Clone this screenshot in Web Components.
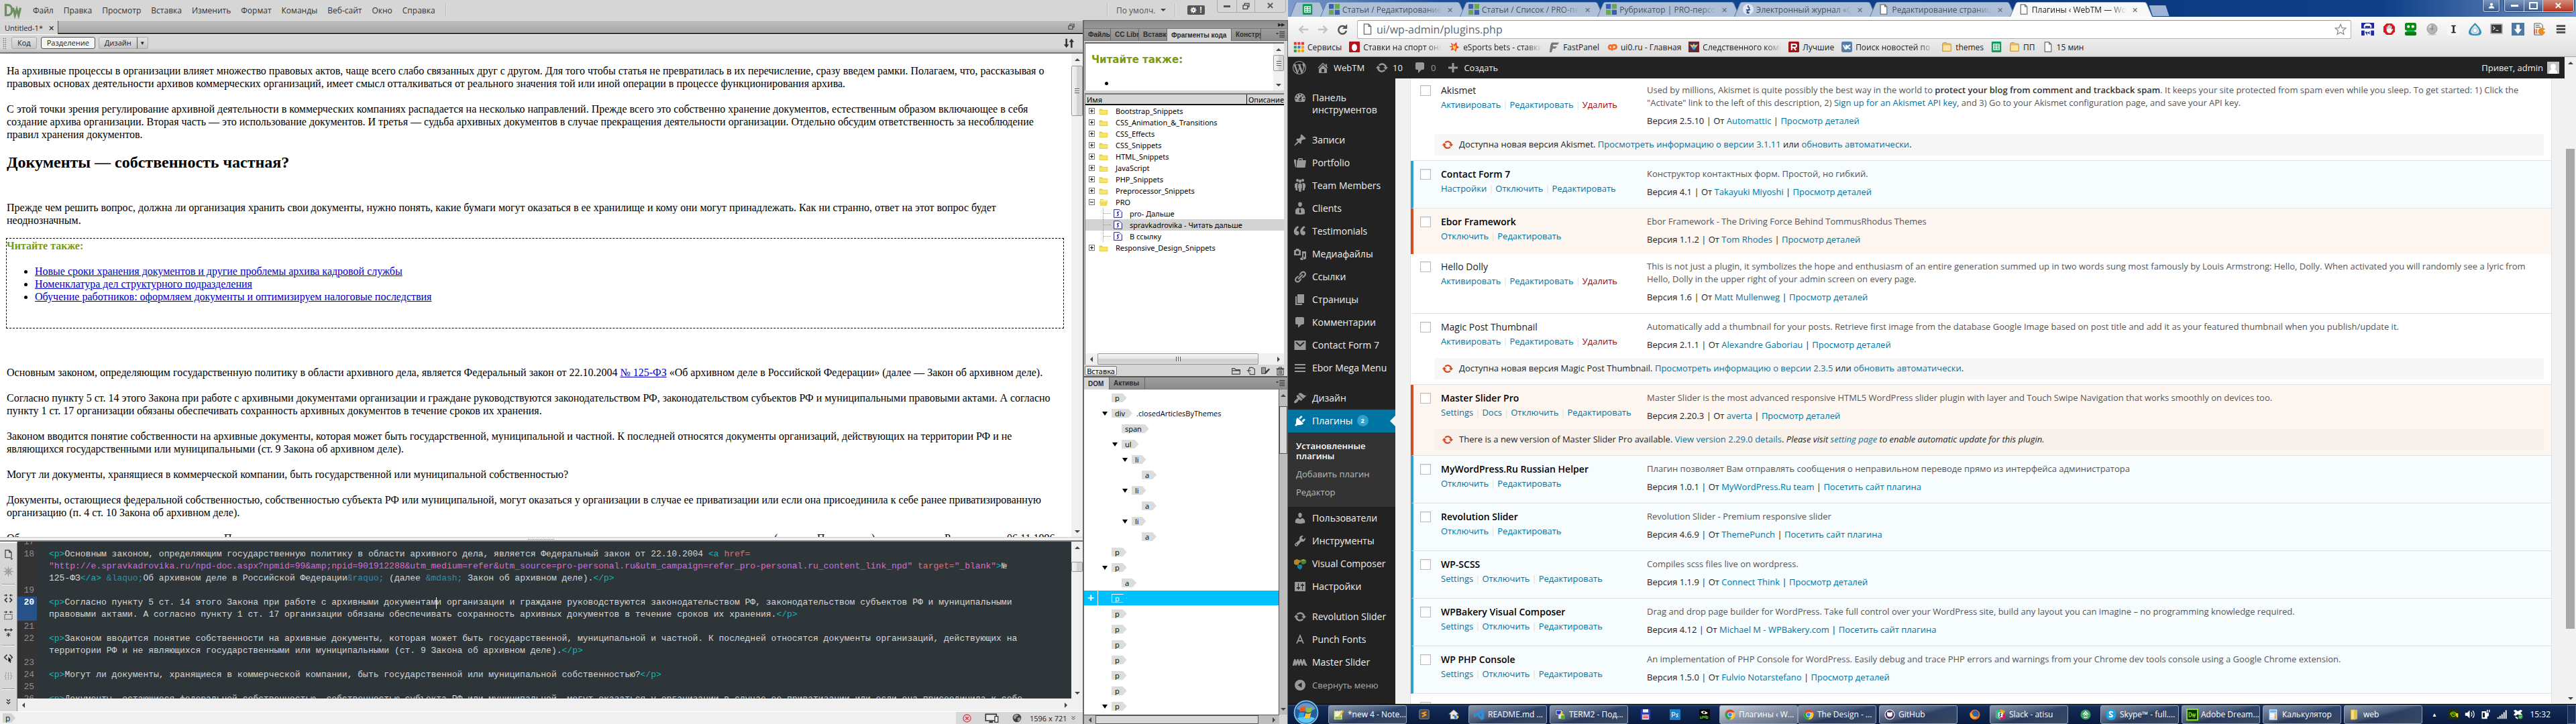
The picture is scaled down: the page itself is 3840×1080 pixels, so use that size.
<!DOCTYPE html>
<html lang="ru">
<head>
<meta charset="utf-8">
<title>Desktop</title>
<style>
html,body{margin:0;height:100%;overflow:hidden;background:#fff}
desk-top{height:100vh}
</style>
</head>
<body>
<desk-top></desk-top>
<script>
const define=(name,css,html)=>customElements.define(name,class extends HTMLElement{
  constructor(){super();const r=this.attachShadow({mode:'open'});
    r.innerHTML='<style>*{box-sizing:border-box}button,select,input{font:inherit;color:inherit;margin:0;border:0;background:none;padding:0}a{color:inherit;text-decoration:none}'+css+'</style>'+(typeof html==='function'?html(this):html);}
});

/* ---------- icons ---------- */
const P=d=>`<path fill="currentColor" d="${d}"/>`;
const ICONS={
 wp:P("M20 10c0-5.51-4.49-10-10-10C4.48 0 0 4.49 0 10c0 5.52 4.48 10 10 10 5.51 0 10-4.48 10-10zM7.78 15.37L4.37 6.22c.55-.02 1.17-.08 1.17-.08.5-.06.44-1.13-.06-1.11 0 0-1.45.11-2.37.11-.18 0-.37 0-.58-.01C4.12 2.69 6.87 1.11 10 1.11c2.33 0 4.45.87 6.05 2.34-.68-.11-1.65.39-1.65 1.58 0 .74.45 1.36.9 2.1.35.61.55 1.36.55 2.46 0 1.49-1.4 5-1.4 5l-3.03-8.37c.54-.02.82-.17.82-.17.5-.05.44-1.25-.06-1.22 0 0-1.44.12-2.38.12-.87 0-2.33-.12-2.33-.12-.5-.03-.56 1.2-.06 1.22l.92.08 1.26 3.41zM17.41 10c.24-.64.74-1.87.43-4.25.7 1.29 1.05 2.71 1.05 4.25 0 3.29-1.73 6.24-4.4 7.78.97-2.59 1.94-5.2 2.92-7.78zM6.1 18.09C3.12 16.65 1.11 13.53 1.11 10c0-1.3.23-2.48.72-3.59C3.25 10.3 4.67 14.2 6.1 18.09zm4.03-6.63l2.58 6.98c-.86.29-1.76.45-2.71.45-.79 0-1.57-.11-2.29-.33.81-2.38 1.62-4.74 2.42-7.1z"),
 home:P("M16 8.5l1.53 1.53-1.06 1.06L10 4.6l-6.47 6.49-1.06-1.06L10 2.5l4 4v-2h2v4zm-6-2.46l6 5.99V18H4v-5.97zM12 17v-5H8v5h4z"),
 update:P("M10.2 3.28c3.53 0 6.43 2.61 6.92 6h2.08l-3.5 4-3.5-4h2.32c-.45-1.97-2.21-3.45-4.32-3.45-1.45 0-2.73.71-3.54 1.78L4.95 5.66C6.23 4.2 8.11 3.28 10.2 3.28zm-.4 13.44c-3.52 0-6.43-2.61-6.92-6H.8l3.5-4c1.17 1.33 2.33 2.67 3.5 4H5.48c.45 1.97 2.21 3.45 4.32 3.45 1.45 0 2.73-.71 3.54-1.78l1.71 1.95c-1.28 1.46-3.15 2.38-5.25 2.38z"),
 comment:P("M5 2h9c1.1 0 2 .9 2 2v7c0 1.1-.9 2-2 2h-2l-5 5v-5H5c-1.1 0-2-.9-2-2V4c0-1.1.9-2 2-2z"),
 plus:P("M8.500 3h3v5.500h5.500v3h-5.500V17h-3v-5.500H3v-3h5.500z"),
 dash:P("M3.760 16h12.480c1.100-1.370 1.760-3.110 1.760-5 0-4.420-3.580-8-8-8s-8 3.580-8 8c0 1.890.660 3.630 1.760 5zM10 4c.55 0 1 .45 1 1s-.45 1-1 1-1-.45-1-1 .45-1 1-1zM6 6c.55 0 1 .45 1 1s-.45 1-1 1-1-.45-1-1 .45-1 1-1zm8 0c.55 0 1 .45 1 1s-.45 1-1 1-1-.45-1-1 .45-1 1-1zm-5.370 5.550L12 7v6c0 1.100-.9 2-2 2s-2-.9-2-2c0-.57.24-1.080.63-1.450zM4 10c.55 0 1 .45 1 1s-.45 1-1 1-1-.45-1-1 .45-1 1-1zm12 0c.55 0 1 .45 1 1s-.45 1-1 1-1-.45-1-1 .45-1 1-1zm-5 3c0-.55-.45-1-1-1s-1 .45-1 1 .45 1 1 1 1-.45 1-1z"),
 pin:P("M10.44 3.02l1.82-1.82 6.36 6.35-1.83 1.82c-1.05-.68-2.48-.57-3.41.36l-.75.75c-.92.93-1.04 2.35-.35 3.41l-1.83 1.82-2.41-2.41-2.8 2.79c-.42.42-3.38 2.71-3.8 2.29s1.86-3.39 2.28-3.81l2.79-2.79L4.1 9.36l1.83-1.82c1.05.69 2.48.57 3.4-.36l.75-.75c.93-.92 1.05-2.35.36-3.41z"),
 folio:P("M1 5h3v10.500L3 17 1 8zM5 6h2V4.500C7 3.500 7.500 3 8.500 3h4c1 0 1.500.5 1.500 1.500V6h5l-1.500 11H4.500L5.500 7zM8.500 6h4V4.500h-4z"),
 team:P("M6 4.200a2 2.200 0 1 1 .1 0zM14 4.200a2 2.200 0 1 1 .1 0zM10 5.800a2.200 2.500 0 1 1 .1 0zM10 6.500c2 0 3 1 3 3v4l-1 .5-.4 5H8.400L8 14l-1-.5v-4c0-2 1-3 3-3zM6 6c-3 0-4 1-4 3v3.500l1 .7.5 3.800h3.200L6 14.500V9c0-1 .5-2 1.200-2.700zM14 6c3 0 4 1 4 3v3.500l-1 .7-.5 3.800h-3.200l.7-2.500V9c0-1-.5-2-1.200-2.700z"),
 client:P("M10 7.500c-2.500 0-3-3-2.800-4.700C7.400 1.300 8.500.5 10 .5s2.600.8 2.800 2.300c.2 1.700-.3 4.700-2.800 4.700zM7.500 9L9 10h2l1.500-1c2.800.4 4.500 2 4.500 4.500V18c-4 1.300-10 1.300-14 0v-4.500C3 11 4.700 9.400 7.500 9zM9.300 11L8.500 15.500 10 17l1.500-1.500L10.700 11z"),
 quote:P("M8.540 12.740c0-.87-.24-1.610-.72-2.220-.73-.920-2.140-1.030-2.960-.850-.340-1.930 1.300-4.390 3.420-5.450L6.650 1.940C3.450 3.460.310 6.960.850 11.370 1.190 14.160 2.800 16 5.080 16c1 0 1.830-.290 2.480-.880.660-.590.980-1.380.98-2.380zm9.430 0c0-.87-.24-1.610-.72-2.220-.73-.920-2.140-1.030-2.960-.850-.340-1.930 1.300-4.390 3.420-5.450l-1.630-2.280c-3.200 1.520-6.340 5.020-5.800 9.430.34 2.790 1.950 4.630 4.230 4.630 1 0 1.830-.290 2.480-.880.660-.590.980-1.380.98-2.380z"),
 media:`<path fill="currentColor" fill-rule="evenodd" d="M1 4h2l1-2h4l1 2h2v8H1zM6 5.200a2.500 2.500 0 1 0 .1 0zM13 6h6v10a2.500 2 0 1 1-2-2V9h-2v8a2.500 2 0 1 1-4-1.500c.6-.5 1.400-.7 2-.5z"/>`,
 link:P("M17.74 2.76c1.68 1.69 1.68 4.41 0 6.1l-1.53 1.52c-1.12 1.12-2.7 1.47-4.14 1.09l2.62-2.61.76-.77.76-.76c.84-.84.84-2.2 0-3.04-.84-.85-2.2-.85-3.04 0l-.77.76-3.38 3.38c-.37-1.44-.02-3.02 1.1-4.14l1.52-1.53c1.69-1.68 4.42-1.68 6.1 0zM8.59 13.43l5.34-5.34c.42-.42.42-1.1 0-1.52-.44-.43-1.13-.39-1.53 0l-5.33 5.34c-.42.42-.42 1.1 0 1.52.44.43 1.13.39 1.52 0zm-.76 2.29l4.14-4.15c.38 1.44.03 3.02-1.09 4.14l-1.52 1.53c-1.69 1.68-4.41 1.68-6.1 0-1.68-1.68-1.68-4.42 0-6.1l1.53-1.52c1.12-1.12 2.7-1.47 4.14-1.1l-4.14 4.15c-.85.84-.85 2.2 0 3.05.84.84 2.2.84 3.04 0z"),
 page:P("M6 15V2h10v13H6zm-1 1h8v2H3V5h2v11z"),
 mail:`<rect x="1.500" y="3" width="17" height="14" fill="currentColor"/><path d="M4 5.500l6 5.500 6-5.500" fill="none" stroke="#222" stroke-width="1.800"/>`,
 burger:P("M2 4h16v2H2zM2 9h16v2H2zM2 14h16v2H2z"),
 brush:P("M14.48 11.06L7.41 3.99l1.5-1.5c.5-.56 2.3-.47 3.51.32 1.21.8 1.43 1.28 2.91 2.1 1.18.64 2.45 1.26 4.45.85zm-.71.71L6.7 4.7 4.93 6.47c-.39.39-.39 1.02 0 1.41l1.06 1.06c.39.39.39 1.03 0 1.42-.6.6-1.43 1.11-2.21 1.69-.35.26-.7.53-1.01.84C1.43 14.23.4 16.08 1.4 17.07c.99 1 2.84-.03 4.18-1.36.31-.31.58-.66.85-1.02.57-.78 1.08-1.61 1.69-2.21.39-.39 1.02-.39 1.41 0l1.06 1.06c.39.39 1.02.39 1.41 0z"),
 plug:P("M13.11 4.36L9.87 7.6 8 5.73l3.24-3.24c.35-.34 1.05-.2 1.56.32.52.51.66 1.21.31 1.55zm-8 1.77l.91-1.12 9.01 9.01-1.19.84c-.71.71-2.63 1.16-3.82 1.16H6.14L4.9 17.26c-.59.59-1.54.59-2.12 0-.59-.58-.59-1.53 0-2.12l1.24-1.24v-3.88c0-1.13.4-3.19 1.09-3.89zm7.26 3.97l3.24-3.24c.34-.35 1.04-.21 1.55.31.52.51.66 1.21.31 1.55l-3.24 3.25z"),
 user:P("M10 9.25c-2.27 0-2.73-3.44-2.73-3.44C7 4.02 7.82 2 9.97 2c2.16 0 2.98 2.02 2.71 3.81 0 0-.41 3.44-2.68 3.44zm0 2.57L12.72 10c2.39 0 4.52 2.33 4.52 4.53v2.49s-3.65 1.13-7.24 1.13c-3.65 0-7.24-1.13-7.24-1.13v-2.49c0-2.25 1.94-4.48 4.47-4.48z"),
 tools:P("M16.68 9.77c-1.34 1.34-3.3 1.67-4.95.99l-5.41 6.52c-.99.99-2.59.99-3.58 0s-.99-2.59 0-3.57l6.52-5.42c-.68-1.65-.35-3.61.99-4.95 1.28-1.28 3.12-1.62 4.72-1.06l-2.89 2.89 2.82 2.82 2.86-2.87c.53 1.58.18 3.39-1.08 4.65zM3.81 16.21c.4.39 1.04.39 1.43 0 .4-.4.4-1.04 0-1.43-.39-.4-1.03-.4-1.43 0-.39.39-.39 1.03 0 1.43z"),
 vc:`<path fill="#b7861f" d="M1 5l4-2 5 2v3l-2 1v2l-4 1-3-2z"/><path fill="#4f7d3a" d="M10 5l5-2 4 2v4l-4 2-3-1V8h-2z"/><path fill="#8aa13a" d="M10 5l5-2 4 2-4 1z"/><path fill="#1b7f9e" d="M6 12l4-1 3 1v4l-3 3-4-3z"/>`,
 sliders:P("M18 16V4c0-.55-.45-1-1-1H3c-.55 0-1 .45-1 1v12c0 .55.45 1 1 1h14c.55 0 1-.45 1-1zM8 11h1c.55 0 1 .45 1 1s-.45 1-1 1H8v1.5c0 .28-.22.5-.5.5s-.5-.22-.5-.5V13H6c-.55 0-1-.45-1-1s.45-1 1-1h1V5.5c0-.28.22-.5.5-.5s.5.22.5.5V11zm5-2h-1c-.55 0-1-.45-1-1s.45-1 1-1h1V5.5c0-.28.22-.5.5-.5s.5.22.5.5V7h1c.55 0 1 .45 1 1s-.45 1-1 1h-1v5.5c0 .28-.22.5-.5.5s-.5-.22-.5-.5V9z"),
 fonts:`<path fill="none" stroke="currentColor" stroke-width="1.800" d="M5 16L10 4l5 12M7 12h6"/>`,
 mslider:`<path fill="currentColor" d="M-1 15c0-3 1-6 2-9 .6-1.500 2-1.500 2.500 0l1 3 .8-3c.5-1.500 2-1.500 2.600 0l1 3 .8-3c.5-1.500 2-1.500 2.700 0l1 4 1-4c.5-1.500 2-1.500 2.600 0 1 3 2.500 7 4 9h-4l-1.500-4-1 3c-.5 1.500-2 1.500-2.500 0l-1.200-4-1 4c-.5 1.500-2 1.500-2.600 0l-1-3-1 3c-.5 1.500-2 1.500-2.500 0l-.5-2-.5 3z"/>`,
 collapse:`<path fill="currentColor" fill-rule="evenodd" d="M10 2a8 8 0 1 0 .01 0zM12.500 6v8L6.500 10z"/>`,
 sheets:`<rect x="1" y="0" width="18" height="20" rx="1.500" fill="#0f9d58"/><path fill="#fff" d="M4 4h12v12H4zM5.500 5.500v2H9v-2zm5 0v2h4v-2zM5.500 9v2H9V9zm5 0v2h4V9zM5.500 12.500v2H9v-2zm5 0v2h4v-2z" fill-rule="evenodd"/>`,
 squares:`<path fill="#3a5fae" d="M0 0h9v9H0zM11 11h9v9h-9z"/><path fill="#6aa84f" d="M11 0h9v9h-9zM0 11h9v9H0z"/>`,
 doc:`<path d="M4 1h8l4 4v14H4zM12 1v4h4" fill="#fff" stroke="#6b6b6b" stroke-width="1.500"/>`,
 journal:`<circle cx="10" cy="10" r="10" fill="#dfe9f6"/><path fill="none" stroke="#23467e" stroke-width="1.800" d="M11 3c-2 0-2 3 0 3s1 5-2 7 0 5 3 4M6 11h8M7 17l5-2"/>`,
 apps:`<g><path fill="#e33" d="M1 1h5v5H1zM8 1h5v5H8zM15 1h5v5h-5z"/><path fill="#2a9d4a" d="M1 8h5v5H1z"/><path fill="#2f7de1" d="M8 8h5v5H8z"/><path fill="#f0a500" d="M15 8h5v5h-5zM8 15h5v5H8zM15 15h5v5h-5z"/><path fill="#2a9d4a" d="M1 15h5v5H1z"/></g>`,
 egg:`<rect width="20" height="20" rx="1" fill="#b3151b"/><ellipse cx="10" cy="11" rx="5" ry="6.500" fill="#fff"/>`,
 flame:`<path fill="#e8462a" d="M3 2l6 4 5-5 1 7 4 3-5 2-1 6-4-4-6 2 3-6-6-2 6-1z"/><path fill="#ffd23e" d="M7 5l3 4 3-3v6l-2 4-4-4z"/>`,
 fp:`<path fill="#777" d="M5 2h14l-3 4H8l-1 3h8l-3 4H7l-2 7H1l2-14z"/>`,
 cp:`<path fill="none" stroke="#f36c21" stroke-width="3.500" d="M9 7H6a4 4 0 0 0 0 7h2M10 17V9c0-3 7-4 8 0s-3 5-6 5"/>`,
 sk:`<rect width="20" height="20" fill="#7a2325"/><path fill="#27406f" d="M3 3l14 0-1 10-6 6-6-6z"/><path fill="#e0c068" d="M2 5l6 2 2-4 2 4 6-2-4 6-4 3-4-3z"/><circle cx="10" cy="12" r="3" fill="#5aa0d8"/>`,
 rr:`<rect width="20" height="20" rx="2" fill="#a01318"/><path fill="none" stroke="#fff" stroke-width="2.600" d="M6 16V5h6a2.500 2.500 0 0 1 0 6H6M10 11l4 5"/>`,
 vk:`<rect width="20" height="20" rx="3" fill="#587ea8"/><path fill="none" stroke="#fff" stroke-width="2.400" d="M3.500 6.500l3.500 7h1.500v-7M16.500 6.500L10.500 10l6 4M10 6.500v7.500"/>`,
 folder:`<path fill="#e8bb62" stroke="#b98a3a" d="M2 4l2-2h5l2 2h6l1 1v13H2z"/><path fill="#fbe3a0" d="M3.500 7H17v10H3.500z"/>`,
 star:`<path fill="#fff" stroke="#888" stroke-width="1.300" d="M10 1.500l2.500 5.800 6.300.5-4.800 4.100 1.500 6.100L10 14.700 4.500 18 6 11.900 1.200 7.800l6.300-.5z"/>`,
 xvk:`<rect width="20" height="20" fill="#232a94"/><path fill="#fff" d="M0 9h20v3H0zM4 4l3-3h6l3 3v4H4zM5 12h10v8H5z"/><path fill="#232a94" d="M6 5h8v3H6z"/><path d="M6.500 14l2 3.500V14M13.500 14l-3 1.700 3 2" stroke="#232a94" fill="none" stroke-width="1.400"/>`,
 stop:`<path fill="#d7181f" d="M6 1h8l5 5v8l-5 5H6l-5-5V6z"/><path fill="#fff" d="M6 9V6h1.300v4h.7V4h1.500v5h.6V3.500h1.500V9h.6V5h1.500v6l1.500-1.500 1 1L12.500 16h-4L6 13z"/>`,
 robo:`<rect x="1" y="0" width="18" height="12" rx="3" fill="#0c8a17"/><rect x="1" y="14" width="18" height="6" rx="2" fill="#0a7a12"/><circle cx="6.500" cy="6" r="2.200" fill="#fff"/><circle cx="13.500" cy="6" r="2.200" fill="#fff"/><path fill="#0a5" d="M4 12h12v2H4z"/>`,
 ball:`<ellipse cx="10" cy="18.500" rx="7" ry="1.500" fill="#d0d0d0"/><circle cx="10" cy="9.500" r="8" fill="#b5b5b5" stroke="#9a9a9a"/><path d="M10 4v8M7 9h5" stroke="#888" stroke-width="1.500"/><path fill="#d6d6d6" d="M4 8a6 6 0 0 1 5-5v5z"/>`,
 ibeam:`<rect width="20" height="20" fill="#f6f6f6"/><path fill="#222" d="M6.500 4h7v1.500h-2.200v9h2.200V16h-7v-1.500h2.200v-9H6.500z"/>`,
 drop:`<path fill="#3c8fb8" d="M10 0c4 4 10 10 10 15 0 4-3 5-10 5S0 19 0 15C0 10 6 4 10 0z"/><path fill="#dfe7ea" d="M10 3.500c3 3 6.500 7 6.500 10.500 0 2.500-2 3.500-6.500 3.500S3.500 16.500 3.500 14C3.500 10.500 7 6.500 10 3.500z"/><circle cx="10" cy="12" r="3.500" fill="#fff" stroke="#9ab" />`,
 term:`<rect x="0" y="1" width="20" height="17" rx="2" fill="#b9b9b4"/><rect x="2" y="3" width="16" height="13" fill="#3a3a3a"/><path d="M4.500 6l3 2.500-3 2.500M9 12h4" stroke="#e6e6e6" fill="none" stroke-width="1.300"/>`,
 down:`<rect width="20" height="20" fill="#53789f"/><path fill="#fff" d="M7.500 3h5v7H16l-6 7.500L4 10h3.500z"/>`,
 pac:`<path d="M2 1h10l3 3v15H2z" fill="#f4f4f4" stroke="#555"/><path stroke="#444" d="M4 4h6M4 7h8"/><path fill="#ef8c20" d="M13 8a5.500 5.500 0 1 0 6 6l-5-1 5-3a6 6 0 0 0-6-2z"/><path d="M3 10c-1 2-1 5 0 7M6 10c-1 2-1 5 0 7" stroke="#e2492e" fill="none" stroke-width="1.500"/>`,
 cmenu:`<path fill="#4d4d4d" d="M3 3.500h14v3H3zM3 8.500h14v3H3zM3 13.500h14v3H3z"/>`,
 back:`<path d="M18 10H4M9.500 4L3.500 10l6 6" fill="none" stroke="#c4c4c4" stroke-width="2.600"/>`,
 fwd:`<path d="M2 10h14M10.500 4l6 6-6 6" fill="none" stroke="#c4c4c4" stroke-width="2.600"/>`,
 reload:`<path d="M15 6.500A6.500 6.500 0 1 0 16.500 12" fill="none" stroke="#555" stroke-width="2.800"/><path fill="#555" d="M18 1v8h-8z"/>`,
 avatar:`<rect width="20" height="20" fill="#c5c5c5"/><circle cx="10" cy="8" r="4.500" fill="#fff"/><path fill="#fff" d="M3 20c0-5 3-8 7-8s7 3 7 8z"/>`,
 fold:`<path fill="#e5c93f" d="M1 5h6l1 2h11v10H1z"/><path fill="#f7e46b" d="M2 8h16v8H2z"/>`,
 foldo:`<path fill="#e5c93f" d="M3 3h6l1 2h8v4H3z"/><path fill="#fbf3b0" d="M4 5h13v5H4z"/><path fill="#f0dc5a" d="M1 8h18l-2 9H3z"/>`,
 snip:`<path fill="#fff" stroke="#1a1a7a" stroke-width="1.500" d="M1 1h12l6 5v13H1z"/><path fill="#c8c8ff" d="M13 1l6 5h-6z"/><path d="M12.500 7c-3-1.500-5 .5-3 3s2 4.500-2 5" fill="none" stroke="#2323a8" stroke-width="2.200"/>`,
 pfile:`<path d="M3 1h9l5 5v12H3zM12 1v5h5" fill="none" stroke="#333" stroke-width="1.700"/><path fill="#333" d="M14 20h7l-3.500 3z"/>`,
 wheel:`<g stroke="#999" stroke-width="1.500" fill="none"><circle cx="10" cy="10" r="5"/><path d="M10 0v20M0 10h20M3 3l14 14M17 3L3 17"/></g>`,
 ctag:`<path fill="#333" d="M0 2.200h4V0l4 3-4 3V3.800H0zM20 2.200h-4V0l-4 3 4 3V3.800h4z"/><path d="M7 9l-5 5 5 5M13 9l5 5-5 5" fill="none" stroke="#333" stroke-width="2.400"/>`,
 csel:`<path fill="#333" d="M0 2.200h4V0l4 3-4 3V3.800H0zM20 2.200h-4V0l-4 3 4 3V3.800h4z"/><rect x="1.500" y="8.500" width="17" height="11" fill="none" stroke="#333" stroke-width="1.600" stroke-dasharray="2.500 1.500"/>`,
 cexp:`<path fill="#333" d="M0 4l5-4v3h10V0l5 4-5 4V5H5v3z"/><path d="M10 10v10M5.500 12.500l9 5M14.500 12.500l-9 5" stroke="#333" stroke-width="1.700"/>`,
 cpick:`<path d="M7 1L1 7l6 6M13 1l6 6-3 3" fill="none" stroke="#333" stroke-width="2.400"/><path fill="#000" d="M10 6l7 8-3 .5 2 4-2 1-2-4-2 2z"/>`,
 braces:`<path d="M6 2C3 2 4 5 4 7.500S1 10 1 10s3 0 3 2.500S3 18 6 18M14 2c3 0 2 3 2 5.500s3 2.500 3 2.500-3 0-3 2.500 1 5.500-2 5.500M10 2v16" stroke="#999" fill="none" stroke-width="1.700" stroke-dasharray="4 1"/>`,
 more:`<path d="M6 2l4 4 4-4M6 8l4 4 4-4" stroke="#333" fill="none" stroke-width="2"/>`,
 arrows:`<path fill="#333" d="M4 2h3v10h3l-4.500 6L1 12h3zM13 18V8h-3l4.500-6L19 8h-3v10z"/>`,
 restore:`<path d="M6 7V2h12v9h-4M2 7h12v10H2z" fill="none" stroke="#444" stroke-width="2.400"/>`,
 gear:`<path d="M10 1v18M1 10h18M3.600 3.600l12.800 12.800M16.400 3.600L3.600 16.400" stroke="#fff" stroke-width="3"/><circle cx="10" cy="10" r="5.500" fill="#fff"/><circle cx="10" cy="10" r="2" fill="#555"/>`,
 chev:`<path d="M5 5l5 4 5-4M5 10l5 5 5-5" stroke="#444" fill="none" stroke-width="2"/>`,
 err:`<circle cx="10" cy="10" r="8.500" fill="none" stroke="#d8434a" stroke-width="2"/><path d="M6.500 6.500l7 7M13.500 6.500l-7 7" stroke="#d8434a" stroke-width="2.600"/>`,
 screen:`<path d="M1 3h20v12H1z" fill="#e8e8e8" stroke="#333" stroke-width="2"/><path fill="#333" d="M8 16h6l1 3H7z"/><rect x="18" y="7" width="6" height="11" fill="#eee" stroke="#333" stroke-width="1.600"/>`,
 globe:`<circle cx="10" cy="10" r="9" fill="#3d3d3d"/><path fill="#9a9a9a" d="M6 3l5-1 2 3-4 3-2 4-4-1 0-4zM11 10l5-1 2 2-2 5-4 2z"/>`,
 dir:`<path d="M1 17V4h6l2 3h10v10zM1 9h18" fill="none" stroke="#444" stroke-width="1.800"/>`,
 addp:`<path d="M7 5V2h7l5 4v12H8v-4" fill="none" stroke="#444" stroke-width="1.800"/><path d="M1 9h9M5.500 4.500v9" stroke="#444" stroke-width="2"/>`,
 edit:`<path d="M1 2h9v14H1z" fill="#999" stroke="#444" stroke-width="1.500"/><path fill="#333" d="M8 17l2-6 8-7 2 2-8 9z"/>`,
 trash:`<path d="M3 6h14v13H3zM1 4.500h18M7 4V1.500h6V4M7 8v9M10 8v9M13 8v9" fill="none" stroke="#444" stroke-width="1.700"/>`,
 pmenu:`<path fill="#333" d="M0 6h6L3 10zM8 3h12v1.600H8zM8 7h12v1.600H8zM8 11h12v1.600H8zM8 15h12v1.600H8z"/>`,
 notepad:`<rect x="1" y="2" width="15" height="17" fill="#e9f3d0" stroke="#7a9a40"/><path stroke="#333" d="M3 1v3M6 1v3M9 1v3M12 1v3"/><path fill="#7cba3a" d="M3 14h11v4H3z"/><path fill="#f4b52b" d="M17 2l2 2-8 11-3 1 1-3z"/>`,
 sublime:`<rect x="1" y="1" width="18" height="17" rx="2" fill="#4a4a4a" stroke="#999"/><path d="M14 5L7 7.500l6 3L6 14" fill="none" stroke="#f59a23" stroke-width="2.500"/>`,
 house:`<path fill="#e7e7e7" stroke="#888" d="M10 1l9 8h-3v9H4V9H1z"/><path fill="#777" d="M8 10h4v3H8z"/><path fill="#3b7fd0" d="M11 12h4v7l-4-3z"/><path fill="#f2c533" d="M15 12h4v4l-4 3z"/>`,
 vs:`<path fill="#2f8fd8" d="M14 0l5 2v16l-5 2L6 12l-4 3-2-1V6l2-1 4 3zM14 6l-4 4 4 4zM2 8v4l2-2z" fill-rule="evenodd"/>`,
 putty:`<rect x="1" y="1" width="12" height="10" fill="#cdd6e6" stroke="#445"/><rect x="3" y="3" width="8" height="6" fill="#2438c0"/><rect x="6" y="9" width="12" height="9" fill="#dfe4ea" stroke="#556"/><path fill="#f7e017" d="M12 4l-3 6h3l-2 5 6-7h-3l2-4z"/><circle cx="15" cy="15" r="4" fill="#4fae3a"/>`,
 floppy:`<rect x="1" y="0" width="18" height="20" rx="1.500" fill="#2b3fc4"/><path fill="#eee" d="M5 0h10v6H5zM4 10h12v9H4z"/><path fill="#d23" d="M5 12h10v1.500H5zM5 15h10v1.500H5z"/>`,
 ps:`<rect width="20" height="20" rx="1" fill="#1d7fc6"/><path d="M4.500 15V6h3a2.500 2.500 0 0 1 0 5h-3M16 9c-3-1-4 1-2 2.500s1 3-2.500 2" fill="none" stroke="#d8efff" stroke-width="1.600"/>`,
 umb:`<rect width="20" height="20" fill="#060806"/><path fill="#fff" d="M3 5c4-3 9-2 13 2-4 3-9 3-13-2z"/><circle cx="9" cy="6" r="2" fill="#111"/><path stroke="#59b52b" stroke-width="1.500" fill="none" d="M2 13v4h3v-4M7 17v-4l2 2 2-2v4M13 12v5h3v-3h-3"/>`,
 chrome:`<circle cx="10" cy="10" r="9.500" fill="#f7c928"/><path fill="#dd4236" d="M10 10L1.800 5.200A9.500 9.500 0 0 1 18.600 6H10z"/><path fill="#2f9e4f" d="M10 10L1.800 5.200A9.500 9.500 0 0 0 9 19.500l4-6z"/><circle cx="10" cy="10" r="4.500" fill="#fff"/><circle cx="10" cy="10" r="3.500" fill="#3f7ee8"/>`,
 github:`<circle cx="10" cy="10" r="9.500" fill="#fff"/><circle cx="10" cy="10" r="8" fill="#4b2a63"/><path fill="#fff" d="M5 5l3 1h4l3-1v5c0 3-2 4-5 4s-5-1-5-4z"/>`,
 firefox:`<circle cx="10" cy="10" r="9.500" fill="#e66a1f"/><circle cx="11" cy="8.500" r="6" fill="#2f5fb3"/><path fill="#f9a825" d="M1 6c3 1 4 3 5 5s4 4 8 2c-1 4-5 6-9 4S0 11 1 6z"/>`,
 slack:`<path fill="#3cb98c" d="M1 3l9-3v20l-9-4z"/><path fill="#e6a823" d="M10 0l9 3-4 7h-5z"/><path fill="#d81b60" d="M10 10h9v7l-9 3z"/><path fill="#fff" d="M6 6h8v9H6z"/><path d="M12 8c-3-1-4 1-2 2.500s0 3-3 2" fill="none" stroke="#222" stroke-width="1.500"/>`,
 android:`<circle cx="10" cy="10" r="9.500" fill="#3d9e62"/><path d="M5 10l5-6 5 6M6 14c3 2 5 2 8 0M7 7l6 5M13 7l-6 5" stroke="#e8f7ec" stroke-width="1.700" fill="none"/>`,
 skype:`<rect x="1" y="0" width="18" height="20" rx="8" fill="#1aa5e8"/><path d="M13.500 6c-6-3-9 1-4 3.500s3 6-3.500 4" fill="none" stroke="#fff" stroke-width="2.500"/>`,
 dwi:`<rect width="20" height="20" fill="#0c2b06" stroke="#7ee01c" stroke-width="2.500"/><path d="M4 6v8h1.500c4 0 4-8 0-8zM10 8l1.500 6L13 9l1.500 5L16 8" fill="none" stroke="#7ee01c" stroke-width="1.500"/>`,
 calc:`<rect x="2" y="0" width="15" height="20" rx="1" fill="#d7e8f7" stroke="#6a98c8"/><path fill="#6fb0e6" d="M4 2h11v4H4z"/><path fill="#fff" d="M4 8h3v2.500H4zM8 8h3v2.500H8zM4 12h3v2.500H4zM8 12h3v2.500H8z"/><path fill="#f0a030" d="M12 8h3v2.500h-3zM12 12h3v6h-3z"/>`,
 webf:`<path fill="#f4dd86" stroke="#c8a640" d="M3 1h8v18H3z"/><path fill="#e2bd4e" d="M9 2l6-1v17l-6 1z"/>`,
 orb:`<circle cx="10" cy="10" r="9.700" fill="#1f5f9e"/><circle cx="10" cy="10" r="9.200" fill="none" stroke="#8fc7ea" stroke-width=".8"/><path fill="#5cc8f2" d="M3 14.500a8.500 8.500 0 0 0 14 0c-4-2-10-2-14 0z"/><path fill="#ffffff" opacity=".35" d="M2.500 7a8.500 8.500 0 0 1 15 0c-4 2.500-11 2.500-15 0z"/><path fill="#e85a24" d="M5.500 6c1.500-1 3-1 4.200-.3L9 9.300c-1.400-.6-2.700-.5-4.200.3z"/><path fill="#86c440" d="M10.500 6c1.500.6 3 .5 4.500-.3l-.9 3.700c-1.300.8-2.800.8-4.300.2z"/><path fill="#2f9fe0" d="M4.600 10.400c1.400-.8 2.800-.8 4.200-.2l-.9 3.600c-1.300-.6-2.700-.5-4.200.3z"/><path fill="#fbc62b" d="M9.600 10.500c1.500.6 3 .5 4.300-.2l-.9 3.600c-1.400.8-2.900.8-4.300.2z"/>`,
 nv:`<rect width="20" height="20" rx="3" fill="#222d14"/><path fill="none" stroke="#76b900" stroke-width="2" d="M3 10c3-6 11-6 12 0-2 5-8 6-10 1 2-3 6-3 7 0"/><path fill="#f5d21c" d="M14 8h5v8h-3z"/>`,
 snd:`<path fill="#fff" d="M1 7h4l5-5v16l-5-5H1z"/><path d="M13 6c2 2 2 6 0 8M16 3c4 4 4 10 0 14" fill="none" stroke="#fff" stroke-width="1.600"/>`,
 power:`<path fill="#fff" d="M2 4h9v3h5v6l-3 2v4H2zM12 1h2v5h-2zM16 1h2v5h-2z"/><path fill="#123" d="M4 7h4v9H4z"/>`,
 net:`<path fill="#fff" d="M1 16h2.500v3H1zM5 13h2.500v6H5zM9 10h2.500v9H9zM13 6h2.500v13H13zM17 2h2.500v17H17z"/>`,
 dbox:`<path fill="#fff" d="M1 3l4-2 5 3 5-3 4 2-4 4 4 4-4 2-5-3-5 3-4-2 4-4zM5 14l5 3v3l-5-3z"/><circle cx="15" cy="15" r="4.500" fill="#2c9f3a"/><path d="M12.800 15l1.700 1.700 2.800-3" stroke="#fff" fill="none" stroke-width="1.300"/>`,
 flag:`<circle cx="10" cy="6" r="3.500" fill="#fff"/><path fill="#fff" d="M3 16c0-4 3-6 7-6s7 2 7 6z"/>`,
 dwlogo:`<path d="M3 3v14h2.500c8 0 8-14 0-14zM13 7l2.500 10L18 9l2.500 8L23 7" fill="none" stroke="#6f8f63" stroke-width="3"/>`
};
customElements.define('ui-icon',class extends HTMLElement{
  connectedCallback(){ if(this.shadowRoot)return; const n=this.getAttribute('name');
    const vb=n==='screen'?'0 0 25 20':n==='dwlogo'?'0 0 26 20':'0 0 20 20';
    this.attachShadow({mode:'open'}).innerHTML=`<style>:host{display:inline-block;flex:none;width:var(--s,16px);height:var(--s,16px)}svg{display:block;width:100%;height:100%;overflow:visible}</style><svg viewBox="${vb}" aria-hidden="true">${ICONS[n]||''}</svg>`; }
});
const I=(n,st='')=>`<ui-icon name="${n}"${st?` style="${st}"`:''}></ui-icon>`;

/* ---------- scrollbar ---------- */
define('scroll-bar',`
:host{display:flex;flex:none;background:var(--track,#f0f0f0)}
.w{display:flex;flex:1;align-items:stretch;min-width:0}
:host([dir=v]) .w{flex-direction:column}
i{flex:none;width:17px;height:17px;display:grid;place-items:center}
:host([dir=v]) i{width:auto}:host([dir=h]) i{height:auto}
i::before{content:"";border:4px solid transparent}
:host([dir=v]) i.a::before{border-bottom-color:#444;border-top:0}
:host([dir=v]) i.b::before{border-top-color:#444;border-bottom:0}
:host([dir=h]) i.a::before{border-right-color:#444;border-left:0}
:host([dir=h]) i.b::before{border-left-color:#444;border-right:0}
.t{flex:none;border:var(--tb,1px solid #979797);border-radius:var(--tr,2px);background:var(--thumb,linear-gradient(90deg,#f5f5f5,#e6e6e8 45%,#cfcfd2 55%,#d8d8da));display:grid;place-items:center}
:host([dir=v]) .t{height:var(--size);margin-top:var(--at,0);margin-inline:var(--in,0)}
:host([dir=h]) .t{width:var(--size);margin-left:var(--at,0);background:var(--thumb,linear-gradient(#f5f5f5,#e6e6e8 45%,#cfcfd2 55%,#d8d8da))}
:host([grip]) .t::before{content:"";width:7px;height:7px;background:repeating-linear-gradient(var(--ga,180deg),#555 0 1px,#eee 1px 3px)}
:host([dir=h]){--ga:90deg}
:host([bare]) .t{display:none}
.f{flex:1}`,
`<div class="w"><i class="a"></i><div class="t"></div><div class="f"></div><i class="b"></i></div>`);

/* ---------- editor: menu bar ---------- */
define('dw-menubar',`
:host{display:flex;align-items:center;height:30px;background:#d6d6d6;color:#333;font:12px "Open Sans",sans-serif;padding-left:5px}
nav{display:flex;gap:15px;margin-left:15px}
.sep{width:1px;height:20px;background:#bbb;box-shadow:1px 0 #e8e8e8}
nav+.sep{margin-left:15px}
.g{flex:1}
select{appearance:none;width:60px;color:#555;font-size:12px;margin-left:13px}
.ar{border:4px solid transparent;border-top-color:#444;border-bottom:0;margin:0 13px 0 6px}
.sync{width:26px;height:14px;border-radius:2px;background:#555;margin:0 18px;color:#fff;font:bold 12px/14px "Liberation Sans",sans-serif;display:flex;justify-content:space-evenly;align-items:center;--s:10px}
.win{display:flex;height:19px;align-self:flex-start;border:1px solid #aaa;border-top:0;border-radius:0 0 4px 4px;margin-right:3px;width:103px}
.win button{flex:1 1 28px;display:grid;place-items:center}
.win button+button{border-left:1px solid #aaa}
.win button:last-child{flex:1 1 46px;font:bold 13px/18px "Liberation Sans",sans-serif;color:#555}
.min::before{content:"";width:10px;height:3px;background:#555}`,
`${I('dwlogo','width:29px;height:22px')}<nav>${['Файл','Правка','Просмотр','Вставка','Изменить','Формат','Команды','Веб-сайт','Окно','Справка'].map(t=>`<button>${t}</button>`).join('')}</nav><span class="sep"></span><span class="g"></span><span class="sep"></span><select aria-label="Рабочая среда"><option>По умолч.</option></select><span class="ar"></span><span class="sep"></span><button class="sync" aria-label="Синхронизация">${I('gear')}<span>!</span></button><div class="win"><button class="min" aria-label="Свернуть"></button><button aria-label="Восстановить">${I('restore','--s:11px')}</button><button>✕</button></div>`);

/* ---------- editor: document tab and toolbar ---------- */
define('dw-docbar',`
:host{display:block;font:12px "Open Sans",sans-serif;color:#222}
.tabs{display:flex;height:21px;background:linear-gradient(#bfbfbf,#a5a5a5);border-top:1px solid #e0e0e0;border-bottom:2px solid #333;align-items:center;padding-right:12px}
.tab{width:87px;height:20px;background:#d6d6d6;display:flex;align-items:center;gap:8px;padding-left:7px;border-right:1px solid #555;font-size:11px;flex:none;align-self:flex-start}
.g{flex:1}
.bar{height:29px;background:linear-gradient(#d8d8d8 75%,#bdbdbd);border-top:1px solid #fff;border-bottom:2px solid #777;display:flex;align-items:center;padding:0 12px 2px 4px}
.grip{width:5px;height:17px;background:radial-gradient(#777 40%,transparent 50%) 0 0/3px 3px;margin-right:8px}
.bar button{height:18px;border:1px solid #aaa;border-radius:3px;background:linear-gradient(#e4e4e4,#c6c6c6);padding:0 8px;line-height:16px;font-size:11px}
.bar .on{background:#f4f4f4;border-color:#555;margin:0 5px 0 6px}
.bar .dr{border-left:1px solid #555;border-radius:0 3px 3px 0;padding:0;width:17px;font-size:8px;margin-left:-1px}
.bar .dz{border-radius:3px 0 0 3px}`,
`<div class="tabs"><div class="tab"><span>Untitled-1*</span><button aria-label="Закрыть">✕</button></div><span class="g"></span>${I('restore','--s:10px')}</div>
<div class="bar"><span class="grip"></span><button>Код</button><button class="on">Разделение</button><button class="dz">Дизайн</button><button class="dr" aria-label="Режим">▼</button><span class="g"></span>${I('arrows','--s:17px')}</div>`);

/* ---------- editor: design view ---------- */
define('dw-design',`
:host{display:flex;background:#fff;min-height:0;overflow:hidden}
.doc{flex:1;min-width:0;overflow:hidden;padding:16px 11px 0 10px;font:16px/19px "Liberation Serif",serif;color:#000;white-space:nowrap}
p{margin:0 0 19px}
h2{font-size:24px;line-height:28px;margin:-1px 0 44px}
.box{border:1px dashed #000;height:135px;margin:-2px 0 56px -1px}
.box b{color:#7a9a0e;display:block;margin-top:1px}
ul{margin:19px 0 0;padding-left:42px}
.doc a{color:#00c;text-decoration:underline}
.cut{display:grid;grid-template-columns:324px 820px 64px 81px 109px 93px auto;margin:0}
scroll-bar{width:17px}`,
`<div class="doc">
<p>На архивные процессы в организации влияет множество правовых актов, чаще всего слабо связанных друг с другом. Для того чтобы статья не превратилась в их перечисление, сразу введем рамки. Полагаем, что, рассказывая о<br>правовых основах деятельности архивов коммерческих организаций, имеет смысл отталкиваться от реального значения той или иной операции в процессе функционирования архива.</p>
<p>С этой точки зрения регулирование архивной деятельности в коммерческих компаниях распадается на несколько направлений. Прежде всего это собственно хранение документов, естественным образом включающее в себя<br>создание архива организации. Вторая часть — это использование документов. И третья — судьба архивных документов в случае прекращения деятельности организации. Отдельно обсудим ответственность за несоблюдение<br>правил хранения документов.</p>
<h2>Документы — собственность частная?</h2>
<p>Прежде чем решить вопрос, должна ли организация хранить свои документы, нужно понять, какие бумаги могут оказаться в ее хранилище и кому они могут принадлежать. Как ни странно, ответ на этот вопрос будет<br>неоднозначным.</p>
<div class="box"><b>Читайте также:</b><ul><li><a href="#">Новые сроки хранения документов и другие проблемы архива кадровой службы</a></li><li><a href="#">Номенклатура дел структурного подразделения</a></li><li><a href="#">Обучение работников: оформляем документы и оптимизируем налоговые последствия</a></li></ul></div>
<p>Основным законом, определяющим государственную политику в области архивного дела, является Федеральный закон от 22.10.2004 <a href="#">№ 125-ФЗ</a> «Об архивном деле в Российской Федерации» (далее — Закон об архивном деле).</p>
<p>Согласно пункту 5 ст. 14 этого Закона при работе с архивными документами организации и граждане руководствуются законодательством РФ, законодательством субъектов РФ и муниципальными правовыми актами. А согласно<br>пункту 1 ст. 17 организации обязаны обеспечивать сохранность архивных документов в течение сроков их хранения.</p>
<p>Законом вводится понятие собственности на архивные документы, которая может быть государственной, муниципальной и частной. К последней относятся документы организаций, действующих на территории РФ и не<br>являющихся государственными или муниципальными (ст. 9 Закона об архивном деле).</p>
<p>Могут ли документы, хранящиеся в коммерческой компании, быть государственной или муниципальной собственностью?</p>
<p>Документы, остающиеся федеральной собственностью, собственностью субъекта РФ или муниципальной, могут оказаться у организации в случае ее приватизации или если она присоединила к себе ранее приватизированную<br>организацию (п. 4 ст. 10 Закона об архивном деле).</p>
<p class="cut"><span>Об</span><span>П</span><span>(</span><span>П</span><span>)</span><span>Р</span><span>06.11.1996</span></p>
</div><scroll-bar dir="v" grip style="--at:1px;--size:75px"></scroll-bar>`);

/* ---------- editor: code view ---------- */
const T=s=>`<i class="t">${s}</i>`, E=s=>`<i class="e">${s}</i>`;
const CODE=[['17',''],
['18',`${T('&lt;p&gt;')}Основным законом, определяющим государственную политику в области архивного дела, является Федеральный закон от 22.10.2004 ${T('&lt;a')} <i class="k">href=</i>`],
['',`<i class="v">"http://e.spravkadrovika.ru/npd-doc.aspx?npmid=99&amp;amp;npid=901912288&amp;utm_medium=refer&amp;utm_source=pro-personal.ru&amp;utm_campaign=refer_pro-personal.ru_content_link_npd"</i> <i class="k">target=</i><i class="v">"_blank"</i>${T('&gt;')}№`],
['',`125-ФЗ${T('&lt;/a&gt;')} ${E('&amp;laquo;')}Об архивном деле в Российской Федерации${E('&amp;raquo;')} (далее ${E('&amp;mdash;')} Закон об архивном деле).${T('&lt;/p&gt;')}`],
['19',''],
['20',`${T('&lt;p&gt;')}Согласно пункту 5 ст. 14 этого Закона при работе с архивными документам<u></u>и организации и граждане руководствуются законодательством РФ, законодательством субъектов РФ и муниципальными`,1],
['',`правовыми актами. А согласно пункту 1 ст. 17 организации обязаны обеспечивать сохранность архивных документов в течение сроков их хранения.${T('&lt;/p&gt;')}`,1],
['21',''],
['22',`${T('&lt;p&gt;')}Законом вводится понятие собственности на архивные документы, которая может быть государственной, муниципальной и частной. К последней относятся документы организаций, действующих на`],
['',`территории РФ и не являющихся государственными или муниципальными (ст. 9 Закона об архивном деле).${T('&lt;/p&gt;')}`],
['23',''],
['24',`${T('&lt;p&gt;')}Могут ли документы, хранящиеся в коммерческой компании, быть государственной или муниципальной собственностью?${T('&lt;/p&gt;')}`],
['25',''],
['26',`${T('&lt;p&gt;')}Документы, остающиеся федеральной собственностью, собственностью субъекта РФ или муниципальной, могут оказаться у организации в случае ее приватизации или если она присоединила к себе`]];
define('dw-code',`
:host{display:flex;background:#d6d6d6;min-height:0;overflow:hidden}
.tools{width:26px;flex:none;background:#d6d6d6;border-right:1px solid #888;display:flex;flex-direction:column;align-items:center;--s:13px;padding-top:4px;border-top:2px solid #fff}
.tools hr{width:19px;border:0;border-top:1px solid #999;border-bottom:1px solid #fff;margin:6px 0}
.tools button{height:26px;display:grid;place-items:center;width:24px}
.mid{flex:1;display:flex;flex-direction:column;min-width:0}
.area{flex:1;overflow:hidden;background:linear-gradient(90deg,#333 29px,#2d3539 29px);min-height:0}
.lines{margin-top:-8px;font:13px/18px "Liberation Mono",monospace;color:#d6d6d6;white-space:pre}
.l{display:flex;height:18px}
.n{width:29px;padding-right:4px;text-align:right;color:#8e8e8e;flex:none;margin-right:18px}
.cur .n{background:#265287;color:#fff;font-weight:bold}
i{font-style:normal}.t{color:#11b5b5}.k{color:#e36c6c}.v{color:#d66bd6}.e{color:#2d8fae}
u{display:inline-block;width:1px;height:17px;background:#fff;margin-right:-1px;vertical-align:bottom}
.right{width:17px;flex:none;background:#f0f0f0;display:flex;flex-direction:column}
.right scroll-bar{height:234px}
.mid scroll-bar{height:19px;border-top:1px solid #fff}`,
`<div class="tools"><button>${I('pfile')}</button><button>${I('wheel','--s:15px')}</button><hr><button>${I('ctag')}</button><button>${I('csel')}</button><button>${I('cexp')}</button><hr><button>${I('cpick')}</button><button>${I('braces')}</button><hr><button>${I('more')}</button></div>
<div class="mid"><div class="area"><div class="lines">${CODE.map(([n,c,k])=>`<div class="l${k?' cur':''}"><span class="n">${n}</span><span>${c}</span></div>`).join('')}</div></div><scroll-bar dir="h" bare></scroll-bar></div>
<div class="right"><scroll-bar dir="v" style="--at:13px;--size:15px"></scroll-bar></div>`);

define('dw-status',`
:host{display:flex;align-items:center;height:19px;background:#f0f0f0;font:12px "Open Sans",sans-serif;color:#222;padding-left:4px;border-top:1px solid #fff}
.p{background:#d2d2d2;clip-path:polygon(0 0,13px 0,100% 50%,13px 100%,0 100%);width:19px;height:14px;line-height:13px;padding:0 0 0 4px;text-align:left}
.g{flex:1}
.r{display:flex;align-items:center;background:#d8d8d8;width:189px;height:100%;padding-left:10px}
.r ui-icon{margin-right:18px}
.r ui-icon:last-child{margin:0}
select{appearance:none;font-size:11px;width:60px}`,
`<button class="p">p</button><span class="g"></span><div class="r">${I('err','--s:13px')}${I('screen','width:25px;height:16px')}${I('globe','--s:14px;margin-right:12px')}<select aria-label="Размер окна"><option>1596 x 721</option></select>${I('chev','--s:10px')}</div>`);

/* ---------- editor: side panels ---------- */
define('dw-panels',`
:host{display:flex;flex-direction:column;background:#d6d6d6;border:1px solid #666;border-width:1px 1px 0 2px;font:11px "Noto Sans",sans-serif;color:#000;min-height:0}
.strip{height:12px;background:linear-gradient(#8b8b8b,#979797);border-bottom:1px solid #777;display:flex;justify-content:flex-end;padding-right:4px;font-size:7px;line-height:11px;color:#222}
.tabs{height:18px;background:linear-gradient(#9e9e9e,#8c8c8c);display:flex;font:bold 10px/17px "Liberation Sans",sans-serif;color:#2c2c2c;border-bottom:1px solid #777;flex:none}
.tabs button{overflow:hidden;white-space:nowrap;border-right:1px solid #666;padding:0 0 0 6px;text-align:left}
.tabs .on{background:#d6d6d6;height:18px}
.tabs ui-icon{margin:2px 4px 0 auto}
.prev{display:flex;height:72px;margin:2px 5px 4px 1px;background:#fff;border:1px solid #666;border-width:2px 0 0 1px;flex:none}
.prev div{flex:1;padding:14px 0 0 9px}
.prev b{font:bold 15px/20px "DejaVu Sans",sans-serif;color:#7a9a0e;display:block}
.prev li{margin:15px 0 0 36px;font:16px/20px "Liberation Serif",serif}
.prev ul{margin:0;padding:0}
.prev scroll-bar{width:16px}
.tree{flex:none;height:405px;background:#fff;margin:0 5px 0 1px;border-top:2px solid #777;border-left:1px solid #777;display:flex;flex-direction:column}
.hd{display:flex;height:16px;background:#d6d6d6;border-bottom:2px solid #111;line-height:15px;flex:none}
.hd span:first-child{width:244px;border-right:1px solid #111;padding-left:2px}.hd span{padding-left:2px}
.row{display:flex;height:17px;align-items:center;padding-left:5px}
.row .x{width:9px;height:9px;border:1px solid #777;background:linear-gradient(#000,#000) center/5px 1px no-repeat,linear-gradient(#000,#000) center/1px 5px no-repeat;margin-right:6px;flex:none}
.row .x.m{background:linear-gradient(#000,#000) center/5px 1px no-repeat}
.row ui-icon{--s:14px;margin-right:11px}
.kid{padding-left:41px}.kid ui-icon{--s:13px;margin-right:11px}
.kid::before{content:"";width:12px;height:17px;margin:0 3px 0 -15px;border-left:1px dotted #999;background:linear-gradient(90deg,#999 50%,transparent 50%) 0 50%/2px 1px repeat-x}
.sel{background:#d3d3d3}
.g{flex:1}
.tree scroll-bar{height:17px}
.foot{height:16px;display:flex;align-items:center;padding:0 4px 0 1px;gap:9px;margin:1px 0 0}
.foot button{border:1px solid #777;border-radius:2px;background:#eee;height:14px;line-height:11px;width:48px;margin-right:auto}
.foot ui-icon{--s:13px}
.tabs.two{border-top:2px solid #555;height:20px}
.dom{flex:1;display:flex;min-height:0;background:#fff}
.list{flex:1;padding-top:1px;font:12px "Open Sans",sans-serif}
.n{height:23px;display:flex;align-items:center;padding-left:calc(27px + var(--d)*15px)}
.n::before{content:"";border:4px solid transparent;border-top:6px solid transparent;border-bottom:0;margin-right:6px}
.n.o::before{border-top-color:#000}
.n button{background:#dcdcdc;height:13px;line-height:11px;padding:0 11px 0 5px;clip-path:polygon(0 0,calc(100% - 6px) 0,100% 50%,calc(100% - 6px) 100%,0 100%);font-size:11px}
.n em{font-style:normal;margin-left:6px;font-size:11px}
.n.s{background:linear-gradient(90deg,transparent 20px,#fff 20px,#fff 21px,transparent 21px) #00c1ff;padding:0;border-bottom:1px solid #fff}
.n.s::before{content:"+";border:0;color:#fff;font:bold 17px/18px "Liberation Sans",sans-serif;width:20px;text-align:center;margin-right:19px}
.n.s button{background:#00c1ff;color:#fff;box-shadow:inset 0 0 0 1px #fff;margin-left:2px}
.dom scroll-bar{width:13px;--track:#bdbdbd;--thumb:#d8d8d8;--tr:0;--tb:1px solid #555;border-left:1px solid #555}
.hs{height:14px;--track:#bdbdbd;--thumb:#d8d8d8;--tr:0;--tb:1px solid #555;border-top:1px solid #555;margin-right:12px}`,
()=>{
 const f=['Bootstrap_Snippets','CSS_Animation_&amp;_Transitions','CSS_Effects','CSS_Snippets','HTML_Snippets','JavaScript','PHP_Snippets','Preprocessor_Snippets'];
 const row=t=>`<div class="row"><span class="x"></span>${I('fold')}${t}</div>`;
 const kid=(t,s='')=>`<div class="row kid ${s}">${I('snip')}${t}</div>`;
 const n=(d,t,o='',e='')=>`<div class="n ${o}" style="--d:${d}"><button>${t}</button>${e}</div>`;
 return `<div class="strip">▶▶</div>
<div class="tabs"><button style="width:40px">Файлы</button><button style="width:42px">CC Libra</button><button style="width:42px">Вставка</button><button class="on" style="width:96px">Фрагменты кода</button><button style="width:44px">Констру</button>${I('pmenu','--s:13px')}</div>
<div class="prev"><div><b>Читайте также:</b><ul><li></li></ul></div><scroll-bar dir="v" grip style="--size:24px"></scroll-bar></div>
<div class="tree"><div class="hd"><span>Имя</span><span>Описание</span></div>${f.map(row).join('')}<div class="row"><span class="x m"></span>${I('foldo')}PRO</div>${kid('pro- Дальше')}${kid('spravkadrovika - Читать дальше','sel')}${kid('В ссылку')}${row('Responsive_Design_Snippets')}<span class="g"></span><scroll-bar dir="h" grip style="--at:1px;--size:240px"></scroll-bar></div>
<div class="foot"><button>Вставка</button>${I('dir')}${I('addp')}${I('edit')}${I('trash')}</div>
<div class="tabs two"><button class="on" style="width:38px">DOM</button><button style="width:53px">Активы</button>${I('pmenu','--s:13px')}</div>
<div class="dom"><div class="list">${n(0,'p')}${n(0,'div','o','<em>.closedArticlesByThemes</em>')}${n(1,'span')}${n(1,'ul','o')}${n(2,'li','o')}${n(3,'a')}${n(2,'li','o')}${n(3,'a')}${n(2,'li','o')}${n(3,'a')}${n(0,'p')}${n(0,'p','o')}${n(1,'a')}${n(0,'p','s')}${n(0,'p').repeat(6)}${n(0,'p','o')}</div><scroll-bar dir="v" style="--at:8px;--size:71px"></scroll-bar></div>
<scroll-bar class="hs" dir="h" style="--size:243px"></scroll-bar>`;});

define('dw-app',`
:host{display:flex;flex-direction:column;min-width:0;min-height:0;background:#d6d6d6}
.m{flex:1;display:grid;grid-template-columns:1fr 306px;min-height:0}
.l{display:flex;flex-direction:column;min-width:0;min-height:0}
dw-design{flex:721 1 0}dw-code{flex:253 1 0}
.split{height:7px;background:#f0f0f0;border-top:1px solid #ccc;border-bottom:2px solid #777;display:flex;justify-content:center;align-items:center;flex:none}
.split::before{content:"";width:40px;height:1px;background:repeating-linear-gradient(90deg,#777 0 1px,transparent 1px 2px)}`,
`<dw-menubar></dw-menubar><div class="m"><div class="l"><dw-docbar></dw-docbar><dw-design></dw-design><div class="split"></div><dw-code></dw-code><dw-status></dw-status></div><dw-panels></dw-panels></div>`);

/* ---------- browser chrome ---------- */
define('br-tab',`
:host{display:flex;position:relative;flex:0 0 194px;margin-right:-1px;height:24px;align-items:center;gap:4px;padding:2px 15px 0 9px;color:#4a4f58}
:host([pinned]){flex-basis:46px;padding-left:14px}
:host([on]){flex-basis:202px;color:#222;z-index:1;padding-right:18px}
svg.bg{position:absolute;inset:2px -4px 0 -4px;width:calc(100% + 8px);height:22px}
.bg path{fill:#aebfd8;stroke:#5b7aa8}
:host([on]) .bg path{fill:#f8f8f8}
ui-icon,span,button{position:relative}
span{flex:1;min-width:0;overflow:hidden;white-space:nowrap;-webkit-mask:linear-gradient(90deg,#000 calc(100% - 24px),transparent);mask:linear-gradient(90deg,#000 calc(100% - 24px),transparent)}
button{color:#666;font-size:11px;margin-left:4px}`,
e=>`<svg class="bg" viewBox="0 0 200 22" preserveAspectRatio="none"><path vector-effect="non-scaling-stroke" d="${e.hasAttribute('pinned')?'M0 23L30 3Q33 0 40 0H160Q167 0 170 3L200 23':'M0 23L8 3Q9 0 12 0H188Q191 0 192 3L200 23'}"/></svg>${I(e.getAttribute('icon'))}${e.hasAttribute('pinned')?'':`<span><slot></slot></span><button aria-label="Закрыть">✕</button>`}`);

define('br-top',`
:host{display:block;font:12px "Open Sans",sans-serif;color:#222}
.strip{display:flex;align-items:flex-end;height:25px;padding-left:7px;background:linear-gradient(90deg,#7f9cca,#1b4c93 12%,#0f4590 30%,#0c3a80 60%,#0f3f88 85%,#6f93c4);position:relative}
.new{width:30px;height:16px;background:#9db3d3;clip-path:polygon(0 0,82% 0,100% 100%,18% 100%);margin:0 auto 1px 0}
.win{display:flex;height:18px;align-self:flex-start;border:1px solid #d4e1f3;border-top:0;border-radius:0 0 4px 4px;box-shadow:0 0 0 1px #26406a;background:linear-gradient(#7c97bd,#38588c);margin-right:3px;color:#fff;font:bold 13px/17px "Liberation Sans",sans-serif}
.win.u{width:25px;margin-right:7px}
.win button{display:grid;place-items:center;width:28px}
.win .c{width:46px;background:linear-gradient(#d58d7d,#b6321c);border-radius:0 0 3px 0}
.win button+button{border-left:1px solid #c3d2e8}
.u button{width:100%}
.mn::before{content:"";width:11px;height:3px;background:#fff}
.rs::before{content:"";width:9px;height:7px;border:2px solid #fff}
.nav{display:flex;align-items:center;height:34px;background:linear-gradient(#fafafa,#ececec);padding:2px 7px 0 8px;border-top:1px solid #fff}
.nav>button{display:grid;place-items:center}
.nav .b{width:29px;--s:18px}
.omni{flex:1;display:flex;align-items:center;height:28px;background:#fff;border:1px solid #b4b4b4;border-top-color:#999;border-radius:3px;margin:0 8px;padding:0 6px;gap:5px}
.omni input{flex:1;font:16px "Open Sans",sans-serif;color:#666;outline:0;min-width:0}
.ext{width:32px;--s:19px}
.bm{display:flex;align-items:center;height:26px;background:linear-gradient(#ececec,#dedede);border-bottom:1px solid #a5a5a5;padding:0 0 3px 8px;gap:11px}
.bm a{display:flex;align-items:center;gap:5px;white-space:nowrap}
.bm .f span{width:117px;overflow:hidden;-webkit-mask:linear-gradient(90deg,#000 95px,transparent);mask:linear-gradient(90deg,#000 95px,transparent)}`,
()=>{const b=(i,t,f='')=>`<a href="#" class="${f}">${I(i)}${t?`<span>${t}</span>`:''}</a>`;
return `<div class="strip"><br-tab pinned icon="sheets"></br-tab><br-tab icon="squares">Статьи / Редактирование</br-tab><br-tab icon="squares">Статьи / Список / PRO-пе</br-tab><br-tab icon="squares">Рубрикатор | PRO-персо</br-tab><br-tab icon="journal">Электронный журнал «С</br-tab><br-tab icon="doc">Редактирование страниц</br-tab><br-tab on icon="doc">Плагины ‹ WebTM — Wo</br-tab><button class="new" aria-label="Новая вкладка"></button><div class="win u"><button aria-label="Профиль">${I('flag','--s:12px')}</button></div><div class="win"><button class="mn" aria-label="Свернуть"></button><button class="rs" aria-label="Восстановить"></button><button class="c">✕</button></div></div>
<div class="nav"><button class="b">${I('back')}</button><button class="b">${I('fwd')}</button><button class="b">${I('reload')}</button><div class="omni">${I('doc','--s:17px')}<input aria-label="Адрес" value="ui/wp-admin/plugins.php">${I('star','--s:18px')}</div>${['xvk','stop','robo','ball','ibeam','drop','term','down','pac','cmenu'].map(n=>`<button class="ext">${I(n)}</button>`).join('')}</div>
<div class="bm">${b('apps','Сервисы')}${b('egg','Ставки на спорт онла','f')}${b('flame','eSports bets - ставки','f')}${b('fp','FastPanel')}${b('cp','ui0.ru - Главная')}${b('sk','Следственного коми','f')}${b('rr','Лучшие')}${b('vk','Поиск новостей по з','f')}${b('folder','themes')}${b('sheets','')}${b('folder','ПП')}${b('doc','15 мин')}</div>`;});

/* ---------- site admin ---------- */
define('wp-bar',`
:host{display:flex;align-items:center;height:32px;background:#222;color:#eee;font:13px/32px "Open Sans",sans-serif;padding:0 8px 0 7px}
ui-icon{color:#999;--s:20px}
a{display:flex;align-items:center;gap:6px}
.g{flex:1}`,
`<a href="#" aria-label="WordPress">${I('wp')}</a><a href="#" style="margin-left:15px">${I('home')}WebTM</a><a href="#" style="margin-left:16px">${I('update')}10</a><a href="#" style="margin-left:16px;color:#999">${I('comment')}0</a><a href="#" style="margin-left:16px">${I('plus')}Создать</a><span class="g"></span><a href="#">Привет, admin ${I('avatar','--s:18px')}</a>`);

define('wp-menu',`
:host{display:block;background:#222;color:#eee;font:14px/18px "Open Sans",sans-serif;padding-top:12px;width:160px}
a.i{display:flex;padding:8px 0;gap:8px;padding-left:8px;position:relative}
a.i ui-icon{--s:20px;color:#999;margin:-1px 0}
.gap{margin-top:11px}
.on{background:#0074a2;color:#fff}
a.on ui-icon{color:#fff}
.on::after{content:"";position:absolute;right:0;top:9px;border:8px solid transparent;border-right-color:#f1f1f1;border-left:0}
.on b{background:#2ea2cc;border-radius:9px;font:bold 9px/17px "Open Sans",sans-serif;width:17px;height:17px;text-align:center;margin-left:-2px}
.sub{background:#333;font-size:13px;line-height:15px;padding:7px 0 8px}
.sub a{display:block;padding:6px 12px;color:#bbb}
.sub .c{color:#fff;font-weight:600}
.cl{color:#aaa;font-size:13px}`,
()=>{const m=(i,t,c='')=>`<a href="#" class="i ${c}">${I(i)}<span>${t}</span></a>`;
return `<nav>${m('dash','Панель<br>инструментов')}${m('pin','Записи','gap')}${m('folio','Portfolio')}${m('team','Team Members')}${m('client','Clients')}${m('quote','Testimonials')}${m('media','Медиафайлы')}${m('link','Ссылки')}${m('page','Страницы')}${m('comment','Комментарии')}${m('mail','Contact Form 7')}${m('burger','Ebor Mega Menu')}${m('brush','Дизайн','gap')}<a href="#" class="i on">${I('plug')}<span>Плагины</span><b>2</b></a><div class="sub"><a href="#" class="c">Установленные<br>плагины</a><a href="#">Добавить плагин</a><a href="#">Редактор</a></div>${m('user','Пользователи')}${m('tools','Инструменты')}${m('vc','Visual Composer')}${m('sliders','Настройки')}${m('update','Revolution Slider','gap')}${m('fonts','Punch Fonts')}${m('mslider','Master Slider')}${m('collapse','Свернуть меню','cl')}</nav>`;});

const PLUG=[
 {n:'Akismet',c:'first u',a:['Активировать','Редактировать','!Удалить'],d:'Used by millions, Akismet is quite possibly the best way in the world to <b>protect your blog from comment and trackback spam</b>. It keeps your site protected from spam even while you sleep. To get started: 1) Click the<br>"Activate" link to the left of this description, 2) [Sign up for an Akismet API key], and 3) Go to your Akismet configuration page, and save your API key.',m:'Версия 2.5.10 | От [Automattic] | [Просмотр деталей]',u:'Доступна новая версия Akismet. [Просмотреть информацию о версии 3.1.11] или [обновить автоматически].'},
 {n:'Contact Form 7',c:'act',a:['Настройки','Отключить','Редактировать'],d:'Конструктор контактных форм. Простой, но гибкий.',m:'Версия 4.1 | От [Takayuki Miyoshi] | [Просмотр деталей]'},
 {n:'Ebor Framework',c:'act red nb',a:['Отключить','Редактировать'],d:'Ebor Framework - The Driving Force Behind TommusRhodus Themes',m:'Версия 1.1.2 | От [Tom Rhodes] | [Просмотр деталей]'},
 {n:'Hello Dolly',c:'after',a:['Активировать','Редактировать','!Удалить'],d:'This is not just a plugin, it symbolizes the hope and enthusiasm of an entire generation summed up in two words sung most famously by Louis Armstrong: Hello, Dolly. When activated you will randomly see a lyric from<br>Hello, Dolly in the upper right of your admin screen on every page.',m:'Версия 1.6 | От [Matt Mullenweg] | [Просмотр деталей]'},
 {n:'Magic Post Thumbnail',c:'u',a:['Активировать','Редактировать','!Удалить'],d:'Automatically add a thumbnail for your posts. Retrieve first image from the database Google Image based on post title and add it as your featured thumbnail when you publish/update it.',m:'Версия 2.1.1 | От [Alexandre Gaboriau] | [Просмотр деталей]',u:'Доступна новая версия Magic Post Thumbnail. [Просмотреть информацию о версии 2.3.5] или [обновить автоматически].'},
 {n:'Master Slider Pro',c:'act red u',a:['Settings','Docs','Отключить','Редактировать'],d:'Master Slider is the most advanced responsive HTML5 WordPress slider plugin with layer and Touch Swipe Navigation that works smoothly on devices too.',m:'Версия 2.20.3 | От [averta] | [Просмотр деталей]',u:'There is a new version of Master Slider Pro available. [View version 2.29.0 details]. <em>Please visit [setting page] to enable automatic update for this plugin.</em>'},
 {n:'MyWordPress.Ru Russian Helper',c:'act',a:['Отключить','Редактировать'],d:'Плагин позволяет Вам отправлять сообщения о неправильном переводе прямо из интерфейса администратора',m:'Версия 1.0.1 | От [MyWordPress.Ru team] | [Посетить сайт плагина]'},
 {n:'Revolution Slider',c:'act',a:['Отключить','Редактировать'],d:'Revolution Slider - Premium responsive slider',m:'Версия 4.6.9 | От [ThemePunch] | [Посетить сайт плагина]'},
 {n:'WP-SCSS',c:'act',a:['Settings','Отключить','Редактировать'],d:'Compiles scss files live on wordpress.',m:'Версия 1.1.9 | От [Connect Think] | [Просмотр деталей]'},
 {n:'WPBakery Visual Composer',c:'act',a:['Settings','Отключить','Редактировать'],d:'Drag and drop page builder for WordPress. Take full control over your WordPress site, build any layout you can imagine – no programming knowledge required.',m:'Версия 4.12 | От [Michael M - WPBakery.com] | [Посетить сайт плагина]'},
 {n:'WP PHP Console',c:'act',a:['Settings','Отключить','Редактировать'],d:'An implementation of PHP Console for WordPress. Easily debug and trace PHP errors and warnings from your Chrome dev tools console using a Google Chrome extension.',m:'Версия 1.5.0 | От [Fulvio Notarstefano] | [Просмотр деталей]'},
 {n:'',c:'',a:[],d:'',m:''}];
const L=s=>s.replace(/\[(.+?)\]/g,'<a href="#">$1</a>');
define('wp-plugins',`
:host{display:block;overflow:hidden;font:13px/19px "Open Sans",sans-serif;color:#555;padding:0 20px 0 23px;background:#f1f1f1}
table{width:100%;border-spacing:0;table-layout:fixed;background:#fff;box-shadow:0 0 0 1px #e1e1e1}
td{padding:10px 0 14px;vertical-align:top;border-bottom:1px solid #e1e1e1}
td:first-child{border-left:4px solid transparent;padding-left:10px;line-height:0}
.ck{width:45px}.nm{width:307px}
input{appearance:none;width:16px;height:16px;border:1px solid #bbb;background:#fff;box-shadow:inset 0 1px 2px rgba(0,0,0,.1);margin-top:2px}
strong{display:block;font:14px/20px "Open Sans",sans-serif;color:#222;margin-bottom:2px}
a{color:#0074a2}.del{color:#a00}
.acts i{font-style:normal;color:#ddd;margin:0 3px}
b{font-weight:600;color:#333}
p{margin:0}.meta{margin-top:8px;color:#222}
.act td{background:#f7fcfe}.act td:first-child{border-left-color:#2ea2cc}.act strong{font-weight:600;color:#000}
.red td{background:#fef7f1}.red td:first-child{border-left-color:#d54e21}
.first td{padding-top:8px}
tr.u td{border-bottom:0;padding-bottom:10px}
tr.nb td{border-bottom:0;padding-bottom:12px}
tr.after td{padding-top:9px}
tr.up td{padding:0 11px 7px 31px;line-height:19px}
.msg{height:32px;background:rgba(0,0,0,.03);display:flex;align-items:center;gap:8px;padding-left:11px;color:#222}
.msg span{padding-bottom:1px}
.red .msg{background:rgba(0,0,0,.02)}
.msg ui-icon{color:#d54e21;--s:18px}`,
()=>`<table><colgroup><col class="ck"><col class="nm"><col></colgroup><tbody>${PLUG.map(p=>`<tr class="${p.c}"><td><input type="checkbox" aria-label="${p.n||'Плагин'}"></td><td><strong>${p.n}</strong><div class="acts">${p.a.map(x=>x[0]==='!'?`<a href="#" class="del">${x.slice(1)}</a>`:`<a href="#">${x}</a>`).join('<i>|</i>')}</div></td><td><p>${L(p.d)}</p><p class="meta">${L(p.m)}</p></td></tr>${p.u?`<tr class="up ${p.c.replace(/first|\bu\b/g,'')}"><td colspan="3"><div class="msg">${I('update')}<span>${L(p.u)}</span></div></td></tr>`:''}`).join('')}</tbody></table>`);

define('task-bar',`
:host{display:flex;height:30px;align-items:center;background:linear-gradient(#2d4a78,#132c58 12%,#0c2148 60%,#0a1c3e);border-top:1px solid #000;font:12px "Open Sans",sans-serif;color:#fff;padding-left:8px}
.orb{--s:38px;height:38px;margin:-6px 14px 0 0;position:relative}
.t{width:117px;height:28px;display:flex;align-items:center;gap:5px;padding:0 7px;border:1px solid #8fa0bb;border-radius:3px;background:linear-gradient(165deg,rgba(255,255,255,.5),rgba(255,255,255,.24) 45%,rgba(255,255,255,.12) 55%,rgba(255,255,255,.2));white-space:nowrap;margin-right:4px;flex:none}
.t.l{background:linear-gradient(165deg,rgba(255,255,255,.8),rgba(255,255,255,.5) 50%,rgba(255,255,255,.35));margin-right:0}
.q{width:44px;display:grid;place-items:center;flex:none}
.tray{display:flex;align-items:center;gap:9px;margin:0 auto 0 10px;--s:15px}
.tray span{font-size:8px;margin-right:8px}
time{margin-right:25px}
.d{width:13px;height:28px;border:1px solid #4c6591;background:#1a3058}`,
()=>{const t=(i,x,c='')=>`<button class="t ${c}">${I(i)}<span>${x}</span></button>`,q=i=>`<button class="q">${I(i)}</button>`;
return `<button class="orb" aria-label="Пуск">${I('orb')}</button>${t('notepad','*new 4 - Note...')}${q('sublime')}${q('house')}${t('vs','README.md ...')}${t('putty','TERM2 - Под...')}${q('floppy')}${q('ps')}${q('umb')}${t('chrome','Плагины ‹ W...','l')}${t('chrome','The Design - ...')}${t('github','GitHub')}${q('firefox')}${t('slack','Slack - atisu')}${q('android')}${t('skype','Skype™ - full....')}${t('dwi','Adobe Dream...')}${t('calc','Калькулятор')}${t('webf','web')}<div class="tray"><span>▲</span>${['nv','snd','power','net','dbox'].map(n=>I(n)).join('')}</div><time>15:32</time><span class="d"></span>`;});

define('br-app',`
:host{display:flex;flex-direction:column;min-width:0;min-height:0}
.v{flex:1;display:flex;min-height:0;overflow:hidden;background:#f1f1f1}
.site{flex:1;display:flex;flex-direction:column;min-width:0;min-height:0}
.row{flex:1;display:flex;min-height:0;overflow:hidden}
wp-plugins{flex:1;min-width:0}
.v>scroll-bar{width:17px;--track:#f1f1f1;--thumb:#a8a8a8;--tb:0;--tr:0;--in:2px}`,
`<br-top></br-top><div class="v"><div class="site"><wp-bar></wp-bar><div class="row"><wp-menu></wp-menu><wp-plugins></wp-plugins></div></div><scroll-bar dir="v" style="--at:120px;--size:716px"></scroll-bar></div><task-bar></task-bar>`);

define('desk-top',`:host{display:grid;grid-template-columns:1fr 1fr;grid-template-rows:minmax(0,1fr)}`,`<dw-app></dw-app><br-app></br-app>`);
</script>
</body>
</html>
